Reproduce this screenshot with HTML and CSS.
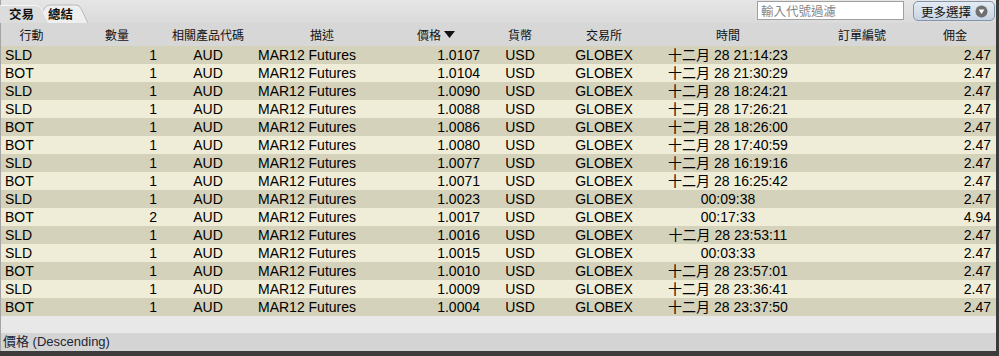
FILE: index.html
```html
<!DOCTYPE html>
<html lang="zh-Hant">
<head>
<meta charset="utf-8">
<title>交易</title>
<link rel="stylesheet" href="styles.css">
</head>
<body>
<div class="window">
  <div class="topbar">
    <div class="tabs">
      <svg class="tab-shapes" width="92" height="23" viewBox="0 0 92 23">
        <path d="M40.5,23 C42,11 44,5 51,5 L76,5 Q79.5,5 81,8.5 L88,23" fill="#efefef" stroke="#b9b9b9"/>
        <path d="M0,23 L0,5 L36,5 Q40,5 42,9 L49,23 Z" fill="#dcdcdc"/>
        <path d="M0.5,5.5 L36,5.5 Q39.5,5.5 41.5,9 L48.5,23" fill="none" stroke="#f6f6f6"/>
      </svg>
      <span class="tab tab-active">交易</span>
      <span class="tab">總結</span>
    </div>
    <div class="tools">
      <div class="filter">輸入代號過濾</div>
      <div class="more">更多選擇
        <svg class="more-icon" width="13" height="13" viewBox="0 0 13 13"><circle cx="6.5" cy="6.5" r="6" fill="#707070"/><path d="M3.6,4.6 L9.4,4.6 L6.5,9 Z" fill="#fff"/></svg>
      </div>
    </div>
  </div>

  <div class="grid head">
    <div class="h">行動</div>
    <div class="h">數量</div>
    <div class="h">相關產品代碼</div>
    <div class="h">描述</div>
    <div class="h h-price">價格 <svg class="sort" width="11" height="7" viewBox="0 0 11 7"><path d="M0,0 L11,0 L5.5,7 Z" fill="#111"/></svg></div>
    <div class="h">貨幣</div>
    <div class="h">交易所</div>
    <div class="h">時間</div>
    <div class="h">訂單編號</div>
    <div class="h h-comm">佣金</div>
  </div>

  <div class="rows">
    <div class="grid row"><div class="c1">SLD</div><div class="c2">1</div><div class="c3">AUD</div><div class="c4">MAR12 Futures</div><div class="c5">1.0107</div><div class="c6">USD</div><div class="c7">GLOBEX</div><div class="c8">十二月 28 21:14:23</div><div class="c9"></div><div class="c10">2.47</div></div>
    <div class="grid row"><div class="c1">BOT</div><div class="c2">1</div><div class="c3">AUD</div><div class="c4">MAR12 Futures</div><div class="c5">1.0104</div><div class="c6">USD</div><div class="c7">GLOBEX</div><div class="c8">十二月 28 21:30:29</div><div class="c9"></div><div class="c10">2.47</div></div>
    <div class="grid row"><div class="c1">SLD</div><div class="c2">1</div><div class="c3">AUD</div><div class="c4">MAR12 Futures</div><div class="c5">1.0090</div><div class="c6">USD</div><div class="c7">GLOBEX</div><div class="c8">十二月 28 18:24:21</div><div class="c9"></div><div class="c10">2.47</div></div>
    <div class="grid row"><div class="c1">SLD</div><div class="c2">1</div><div class="c3">AUD</div><div class="c4">MAR12 Futures</div><div class="c5">1.0088</div><div class="c6">USD</div><div class="c7">GLOBEX</div><div class="c8">十二月 28 17:26:21</div><div class="c9"></div><div class="c10">2.47</div></div>
    <div class="grid row"><div class="c1">BOT</div><div class="c2">1</div><div class="c3">AUD</div><div class="c4">MAR12 Futures</div><div class="c5">1.0086</div><div class="c6">USD</div><div class="c7">GLOBEX</div><div class="c8">十二月 28 18:26:00</div><div class="c9"></div><div class="c10">2.47</div></div>
    <div class="grid row"><div class="c1">BOT</div><div class="c2">1</div><div class="c3">AUD</div><div class="c4">MAR12 Futures</div><div class="c5">1.0080</div><div class="c6">USD</div><div class="c7">GLOBEX</div><div class="c8">十二月 28 17:40:59</div><div class="c9"></div><div class="c10">2.47</div></div>
    <div class="grid row"><div class="c1">SLD</div><div class="c2">1</div><div class="c3">AUD</div><div class="c4">MAR12 Futures</div><div class="c5">1.0077</div><div class="c6">USD</div><div class="c7">GLOBEX</div><div class="c8">十二月 28 16:19:16</div><div class="c9"></div><div class="c10">2.47</div></div>
    <div class="grid row"><div class="c1">BOT</div><div class="c2">1</div><div class="c3">AUD</div><div class="c4">MAR12 Futures</div><div class="c5">1.0071</div><div class="c6">USD</div><div class="c7">GLOBEX</div><div class="c8">十二月 28 16:25:42</div><div class="c9"></div><div class="c10">2.47</div></div>
    <div class="grid row"><div class="c1">SLD</div><div class="c2">1</div><div class="c3">AUD</div><div class="c4">MAR12 Futures</div><div class="c5">1.0023</div><div class="c6">USD</div><div class="c7">GLOBEX</div><div class="c8">00:09:38</div><div class="c9"></div><div class="c10">2.47</div></div>
    <div class="grid row"><div class="c1">BOT</div><div class="c2">2</div><div class="c3">AUD</div><div class="c4">MAR12 Futures</div><div class="c5">1.0017</div><div class="c6">USD</div><div class="c7">GLOBEX</div><div class="c8">00:17:33</div><div class="c9"></div><div class="c10">4.94</div></div>
    <div class="grid row"><div class="c1">SLD</div><div class="c2">1</div><div class="c3">AUD</div><div class="c4">MAR12 Futures</div><div class="c5">1.0016</div><div class="c6">USD</div><div class="c7">GLOBEX</div><div class="c8">十二月 28 23:53:11</div><div class="c9"></div><div class="c10">2.47</div></div>
    <div class="grid row"><div class="c1">SLD</div><div class="c2">1</div><div class="c3">AUD</div><div class="c4">MAR12 Futures</div><div class="c5">1.0015</div><div class="c6">USD</div><div class="c7">GLOBEX</div><div class="c8">00:03:33</div><div class="c9"></div><div class="c10">2.47</div></div>
    <div class="grid row"><div class="c1">BOT</div><div class="c2">1</div><div class="c3">AUD</div><div class="c4">MAR12 Futures</div><div class="c5">1.0010</div><div class="c6">USD</div><div class="c7">GLOBEX</div><div class="c8">十二月 28 23:57:01</div><div class="c9"></div><div class="c10">2.47</div></div>
    <div class="grid row"><div class="c1">SLD</div><div class="c2">1</div><div class="c3">AUD</div><div class="c4">MAR12 Futures</div><div class="c5">1.0009</div><div class="c6">USD</div><div class="c7">GLOBEX</div><div class="c8">十二月 28 23:36:41</div><div class="c9"></div><div class="c10">2.47</div></div>
    <div class="grid row"><div class="c1">BOT</div><div class="c2">1</div><div class="c3">AUD</div><div class="c4">MAR12 Futures</div><div class="c5">1.0004</div><div class="c6">USD</div><div class="c7">GLOBEX</div><div class="c8">十二月 28 23:37:50</div><div class="c9"></div><div class="c10">2.47</div></div>
  </div>

  <div class="filler"></div>
  <div class="status">價格 (Descending)</div>
</div>
</body>
</html>
```

FILE: styles.css
```css
* { box-sizing: border-box; }

html, body {
  margin: 0;
  padding: 0;
}

body {
  width: 999px;
  height: 356px;
  overflow: hidden;
  background: #3b3b3b;
  font-family: "Liberation Sans", "Noto Sans CJK TC", sans-serif;
  color: #000;
}

.window {
  width: 996px;
  height: 351px;
  display: flex;
  flex-direction: column;
  background: #e8e8e8;
  border-left: 1px solid #a4a4a4;
}

.topbar {
  height: 23px;
  display: flex;
  justify-content: space-between;
  align-items: stretch;
  background: linear-gradient(#e6e6e6, #dadada);
}

.tabs {
  position: relative;
  display: flex;
  align-items: flex-end;
  width: 92px;
}

.tab-shapes {
  position: absolute;
  left: -1px;
  top: 0;
}

.tab {
  position: relative;
  font-family: "Noto Sans CJK TC", sans-serif;
  font-weight: 700;
  font-size: 12.5px;
  line-height: 17px;
  height: 18px;
  color: #111;
}

.tab-active {
  margin-left: 8px;
  width: 39px;
}

.tools {
  display: flex;
  align-items: flex-start;
  padding-top: 1px;
  gap: 9px;
  padding-right: 1px;
}

.filter {
  width: 147px;
  height: 19px;
  background: #fff;
  border: 1px solid #a0a0a0;
  font-family: "Noto Sans CJK TC", sans-serif;
  font-size: 12.5px;
  line-height: 17px;
  color: #858585;
  padding-left: 3px;
}

.more {
  width: 82px;
  height: 20px;
  border: 1px solid #8494aa;
  border-radius: 5px;
  background: linear-gradient(#e4ebf3, #c7d4e3);
  display: flex;
  align-items: center;
  gap: 4px;
  padding-left: 7px;
  font-family: "Noto Sans CJK TC", sans-serif;
  font-size: 12.5px;
  color: #111;
}

.more-icon {
  display: block;
}

.grid {
  display: grid;
  grid-template-columns: 61px 110px 72px 156px 88px 64px 104px 144px 124px 72px;
}

.head {
  height: 23px;
  background: #d7d7d7;
}

.h {
  display: flex;
  justify-content: center;
  align-items: center;
  white-space: nowrap;
  font-family: "Noto Sans CJK TC", sans-serif;
  font-size: 12px;
  color: #111;
  padding-bottom: 1px;
}

.h-price {
  padding-right: 16px;
  gap: 3px;
}

.h-comm {
  padding-right: 10px;
}

.sort {
  display: block;
  margin-top: 1px;
}

.rows {
  display: flex;
  flex-direction: column;
}

.row {
  height: 18px;
  font-size: 14px;
  line-height: 18px;
  white-space: nowrap;
  background: #efedd7;
}

.row:nth-child(odd) {
  background: #d4d2ba;
}

.c1 { padding-left: 4px; }
.c2 { text-align: right; padding-right: 15px; }
.c3 { text-align: center; }
.c4 { padding-left: 14px; }
.c5 { text-align: right; padding-right: 8px; }
.c6 { text-align: center; }
.c7 { text-align: center; }
.c8 { text-align: center; }
.c10 { text-align: right; padding-right: 5px; }

.filler {
  flex: 1;
  background: #e8e8e8;
}

.status {
  height: 18px;
  background: #d4d4d4;
  font-size: 13px;
  line-height: 18px;
  padding-left: 2px;
  color: #1d2636;
}
```
